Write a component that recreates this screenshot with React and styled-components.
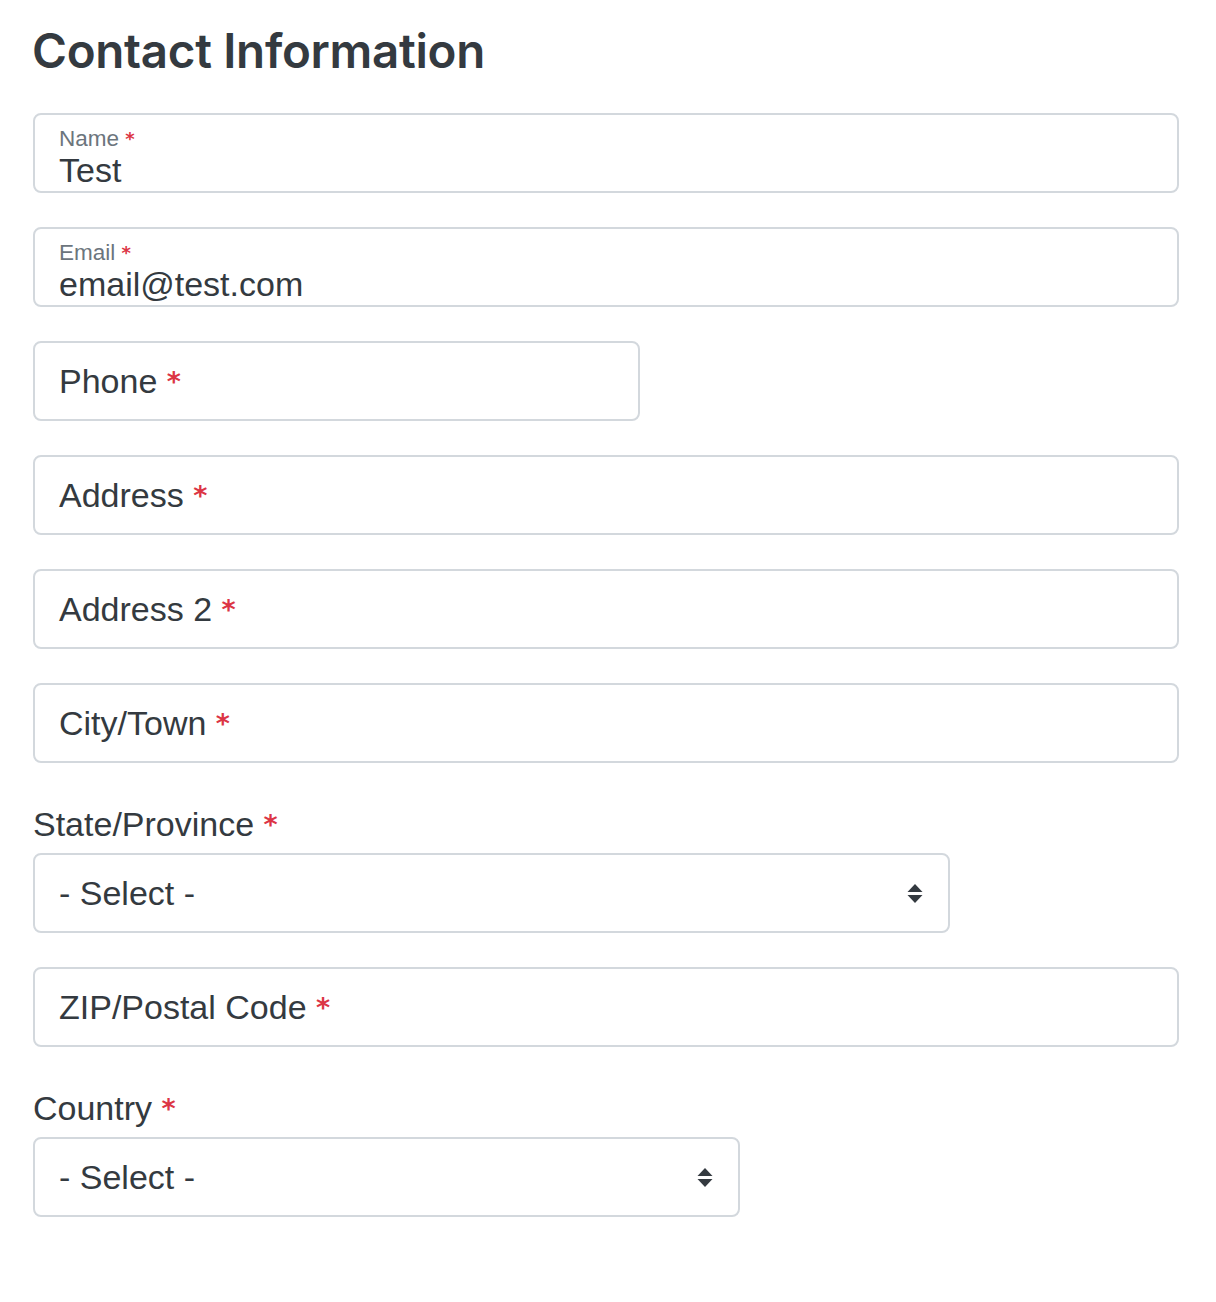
import React from "react";
import styled, { createGlobalStyle } from "styled-components";

const GlobalStyle = createGlobalStyle`
  body {
    margin: 0;
    background: #fff;
    font-family: "Liberation Sans", Arial, sans-serif;
    color: #343a40;
  }
`;

const Page = styled.div`
  padding: 22px 37px 40px 33px;
  width: 1146px;
`;

const Title = styled.h3`
  margin: 0 0 33px -1px;
  font-family: Inter, "Liberation Sans", sans-serif;
  font-size: 47.5px;
  font-weight: 600;
  line-height: 58px;
  color: #343a40;
  letter-spacing: -0.3px;
`;

const Form = styled.div`
  display: flex;
  flex-direction: column;
  gap: 34px;
`;

const Group = styled.div`
  display: flex;
  flex-direction: column;
  gap: 9px;
  padding-top: 7px;
`;

const Box = styled.div`
  box-sizing: border-box;
  height: 80px;
  width: ${(p) => p.$width || "100%"};
  border: 2px solid #d3d8dd;
  border-radius: 8px;
  padding: ${(p) => (p.$filled ? "12px 24px 0" : "0 24px")};
  display: flex;
  flex-direction: column;
  justify-content: ${(p) => (p.$filled ? "flex-start" : "center")};
  position: relative;
  background: #fff;
`;

const SmallLabel = styled.div`
  font-size: 22.5px;
  line-height: 24px;
  height: 24px;
  color: #6c757d;
`;

const Value = styled.div`
  font-size: 34px;
  line-height: 38px;
  color: #343a40;
`;

const Placeholder = styled.div`
  font-size: 34px;
  line-height: 40px;
  height: 40px;
  color: #343a40;
`;

const OuterLabel = styled.div`
  font-size: 34px;
  line-height: 40px;
  height: 40px;
  color: #343a40;
`;

const Star = styled.span`
  color: #dc3545;
  font-family: "DejaVu Sans", sans-serif;
  font-weight: 700;
  font-size: ${(p) => (p.$small ? "18px" : "27px")};
  vertical-align: ${(p) => (p.$small ? "1px" : "2px")};
`;

const Arrows = styled.svg`
  position: absolute;
  right: 25px;
  top: 50%;
  transform: translateY(-50%);
`;

const Filled = ({ label, value }) => (
  <Box $filled>
    <SmallLabel>
      {label} <Star $small>*</Star>
    </SmallLabel>
    <Value>{value}</Value>
  </Box>
);

const Empty = ({ label, width }) => (
  <Box $width={width}>
    <Placeholder>
      {label} <Star>*</Star>
    </Placeholder>
  </Box>
);

const SelectField = ({ label, width }) => (
  <Group>
    <OuterLabel>
      {label} <Star>*</Star>
    </OuterLabel>
    <Box $width={width}>
      <Placeholder>- Select -</Placeholder>
      <Arrows width="16" height="20" viewBox="0 0 16 20">
        <path d="M0.5 9 L8 1 L15.5 9 Z" fill="#343a40" />
        <path d="M0.5 12 L8 20 L15.5 12 Z" fill="#343a40" />
      </Arrows>
    </Box>
  </Group>
);

export default function App() {
  return (
    <>
      <GlobalStyle />
      <Page>
        <Title>Contact Information</Title>
        <Form>
          <Filled label="Name" value="Test" />
          <Filled label="Email" value="email@test.com" />
          <Empty label="Phone" width="607px" />
          <Empty label="Address" />
          <Empty label="Address 2" />
          <Empty label="City/Town" />
          <SelectField label="State/Province" width="917px" />
          <Empty label="ZIP/Postal Code" />
          <SelectField label="Country" width="707px" />
        </Form>
      </Page>
    </>
  );
}
